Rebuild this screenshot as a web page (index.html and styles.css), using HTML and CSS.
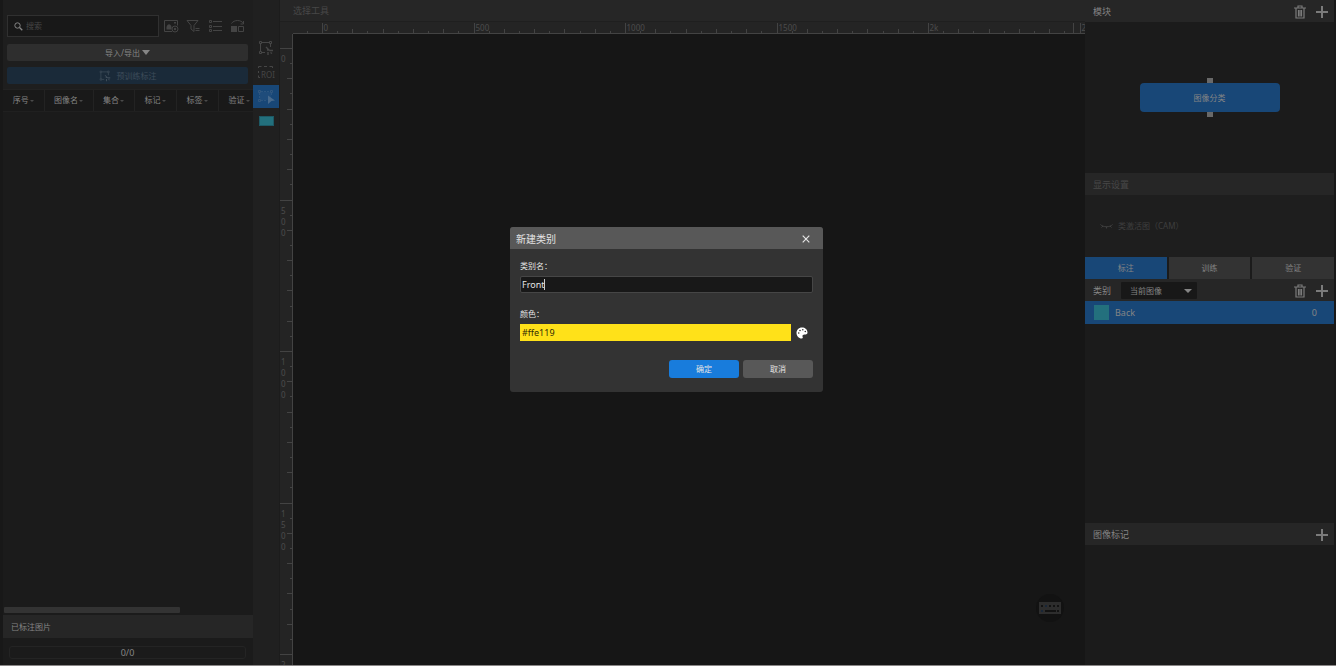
FILE: index.html
```html
<!DOCTYPE html>
<html lang="zh-CN">
<head>
<meta charset="utf-8">
<title>图像分类</title>
<link rel="stylesheet" href="styles.css">
</head>
<body>
<svg class="defs" aria-hidden="true">
  <symbol id="trash" viewBox="0 0 12 14"><path d="M0 3h12M4 2.500V1h4v1.500M2 3.500V13h8V3.500M4.500 5v6.500M6 5v6.500M7.500 5v6.500" fill="none" stroke="currentColor" stroke-width="1.200"/></symbol>
  <symbol id="plus" viewBox="0 0 12 12"><path d="M6 0v12M0 6h12" stroke="currentColor" stroke-width="2"/></symbol>
  <symbol id="nodes" viewBox="0 0 16 16"><path d="M2.500 4v7M4 2.500h7M12.500 4v3M4 12.500h3" fill="none" stroke="currentColor"/><path d="M1.500 1.500h2v2h-2zM11.500 1.500h2v2h-2zM1.500 11.500h2v2h-2z" fill="none" stroke="currentColor"/><path d="M8 7l3 3M9 10h2.500M10 12v3M11.500 10.500H15M12.500 12.500l1.500 1" fill="none" stroke="currentColor" stroke-width="1.400"/></symbol>
</svg>
<div class="app">
  <aside class="left">
    <div class="left-tools">
      <div class="search-row">
        <label class="search">
          <svg width="9" height="9" viewBox="0 0 9 9"><circle cx="3.500" cy="3.500" r="2.700" fill="none" stroke="currentColor"/><path d="M5.500 5.500L8.300 8.300" stroke="currentColor" stroke-width="1.300"/></svg>
          <input type="text" placeholder="搜索" aria-label="搜索">
        </label>
        <button class="icon" aria-label="图片"><svg width="15" height="14" viewBox="0 0 15 14"><path d="M8 12.500H.5V1.500h13v5" fill="none" stroke="currentColor"/><path d="M2.500 10.500V8C3 5 6.500 3.500 7.500 8v2.500z" fill="currentColor"/><path d="M10 3h2v1.500h-2z" fill="currentColor"/><circle cx="11" cy="10" r="3" fill="none" stroke="currentColor"/><circle cx="11" cy="10" r="1.200" fill="currentColor"/></svg></button>
        <button class="icon" aria-label="筛选"><svg width="15" height="14" viewBox="0 0 15 14"><path d="M1 1.500h11L8 6.500v6L5 10V6.500z" fill="none" stroke="currentColor"/><path d="M9.500 9.500h4M9.500 11.500h4" stroke="currentColor"/></svg></button>
        <button class="icon" aria-label="列表"><svg width="15" height="14" viewBox="0 0 15 14"><path d="M1.500 1.500h2v2h-2zM1.500 6.500h2v2h-2zM1.500 10.500h2v2h-2zM5 2.500h9M5 7.500h9M5 11.500h9" fill="none" stroke="currentColor"/></svg></button>
        <button class="icon" aria-label="视图"><svg width="15" height="14" viewBox="0 0 15 14"><path d="M1.500 4.500C4 .5 11 .5 13.500 4.500M13.500 2v3h-3" fill="none" stroke="currentColor"/><path d="M1 7h6v6H1z" fill="currentColor"/><path d="M8.500 7.500h5v5h-5z" fill="none" stroke="currentColor"/></svg></button>
      </div>
      <button class="io">导入/导出 <svg width="8" height="5" viewBox="0 0 8 5"><path d="M0 0h8L4 5z" fill="currentColor"/></svg></button>
      <button class="pretrain" disabled><svg width="12" height="12"><use href="#nodes"/></svg>预训练标注</button>
    </div>
    <div class="table-wrap">
      <table>
        <colgroup><col class="c1"><col class="c2"><col class="c3"><col class="c4"><col class="c4"><col class="c4"></colgroup>
        <thead><tr><th>序号<i></i></th><th>图像名<i></i></th><th>集合<i></i></th><th>标记<i></i></th><th>标签<i></i></th><th>验证<i></i></th></tr></thead>
      </table>
    </div>
    <div class="scrollbar"></div>
    <h2 class="bar">已标注图片</h2>
    <div class="progress-area"><div class="progress">0/0</div></div>
  </aside>

  <nav class="toolbar">
    <button aria-label="智能标注"><svg width="16" height="16"><use href="#nodes"/></svg></button>
    <button aria-label="ROI"><svg width="18" height="15" viewBox="0 0 18 15"><path d="M1.500 3V1.500h3M7 1.500h3M12.500 1.500h3V3M1.500 6v2M1.500 10.500v2H3" fill="none" stroke="currentColor"/><text x="4" y="13">ROI</text></svg></button>
    <button class="on" aria-label="选择"><svg width="18" height="16" viewBox="0 0 18 16"><path d="M3 3h11v8H3z" fill="#1f4c7b"/><path d="M4 2.500h9M2.500 4v6M14.500 4v3M4 11.500h6" stroke="#2b5580" stroke-dasharray="2 1"/><path d="M1.500 1.500h2v2h-2zM13.500 1.500h2v2h-2zM1.500 10.500h2v2h-2z" fill="none" stroke="#31577e"/><path d="M11 6.500l7 5-3.500.5-3.500 3z" fill="#47698c"/></svg></button>
    <button aria-label="颜色"><span class="chip"></span></button>
  </nav>

  <main class="center">
    <header class="bar dim">选择工具</header>
    <div class="work">
      <svg class="ruler ruler-x" id="rulerX"></svg>
      <svg class="ruler ruler-y" id="rulerY"></svg>
      <div class="canvas">
        <button class="keyboard" aria-label="快捷键"><svg width="22" height="12" viewBox="0 0 22 12"><path d="M0 0h22v12H0z" fill="#2d2d2d"/><path d="M2 3h2v2H2zM10 3h2v2h-2zM14 3h2v2h-2zM18 3h2v2h-2zM6 8h11v2H6zM18 8h2v2h-2z" fill="#121212"/><path d="M6 3h2v2H6zM2 8h2v2H2z" fill="#182638"/></svg></button>
      </div>
    </div>
  </main>

  <aside class="right">
    <header class="bar"><span class="grow">模块</span><button class="icon" aria-label="删除模块"><svg width="12" height="14"><use href="#trash"/></svg></button><button class="icon" aria-label="添加模块"><svg width="12" height="12"><use href="#plus"/></svg></button></header>
    <div class="flow"><span class="port"></span><button class="node">图像分类</button><span class="port"></span></div>
    <header class="bar dim">显示设置</header>
    <div class="cam"><svg width="13" height="6" viewBox="0 0 13 6"><path d="M.5 1.500C3 4.500 10 4.500 12.500 1.500M3 3L1.500 4.500M6.500 3.500v2M10 3l1.500 1.500" fill="none" stroke="currentColor"/></svg>类激活图（CAM）</div>
    <div class="tabs"><button class="on">标注</button><button>训练</button><button>验证</button></div>
    <div class="bar class-bar">
      <label for="scope">类别</label>
      <span class="select"><select id="scope"><option>当前图像</option></select><svg width="8" height="4" viewBox="0 0 8 4"><path d="M0 0h8L4 4z" fill="currentColor"/></svg></span>
      <span class="grow"></span>
      <button class="icon" aria-label="删除类别"><svg width="12" height="14"><use href="#trash"/></svg></button><button class="icon" aria-label="添加类别"><svg width="12" height="12"><use href="#plus"/></svg></button>
    </div>
    <div class="class-row"><span class="swatch"></span><span class="grow">Back</span><span>0</span></div>
    <div class="class-list"></div>
    <header class="bar"><span class="grow">图像标记</span><button class="icon" aria-label="添加标记"><svg width="12" height="12"><use href="#plus"/></svg></button></header>
    <div class="tag-list"></div>
  </aside>
</div>

<div class="overlay">
  <form class="dialog" role="dialog" aria-labelledby="dlg-title">
    <header><h1 id="dlg-title">新建类别</h1><button type="button" class="close" aria-label="关闭"><svg width="8" height="8" viewBox="0 0 8 8"><path d="M.7.7l6.600 6.600M7.300.7L.7 7.300" stroke="currentColor" stroke-width="1.200"/></svg></button></header>
    <div class="body">
      <label for="name">类别名：</label>
      <div class="field"><input id="name" type="text" value="Front"><span class="caret"></span></div>
      <label for="color" class="second">颜色：</label>
      <div class="color-row">
        <input id="color" type="text" value="#ffe119">
        <button type="button" class="palette" aria-label="选择颜色"><svg width="12" height="12" viewBox="0 0 12 12"><path d="M6 .5C2.500.5.5 3 .5 6s2.500 5.500 5 5.500c1.500 0 1.500-1 1-2S7 7.500 8.500 7.500c2 0 3-.5 3-2C11.500 2.500 9 .5 6 .5z" fill="#fff"/><g fill="#333"><circle cx="2.700" cy="6" r=".8"/><circle cx="4" cy="3.500" r=".8"/><circle cx="6.800" cy="2.700" r=".8"/><circle cx="9.300" cy="4.500" r=".8"/></g></svg></button>
      </div>
      <div class="actions"><button type="submit" class="ok">确定</button><button type="button">取消</button></div>
    </div>
  </form>
</div>
<script src="ruler.js"></script>
</body>
</html>
```

FILE: styles.css
```css
* { box-sizing: border-box; }
body {
  margin: 0;
  background: #181818;
  color: #858585;
  font: 9px/12px "Noto Sans", "Noto Sans CJK SC", sans-serif;
}
button, input, select { font: inherit; color: inherit; border: 0; padding: 0; margin: 0; background: none; }
button { display: flex; align-items: center; justify-content: center; }
svg { display: block; flex: none; }
h1, h2 { margin: 0; font: inherit; }
.defs { position: absolute; width: 0; height: 0; }
.grow { flex: 1; }

.app {
  display: grid;
  grid-template-columns: 250px 27px minmax(0, 1fr) 249px;
  height: 100vh;
  padding: 0 2px 0 3px;
  border-bottom: 1px solid #8a8787;
}
.bar {
  display: flex;
  align-items: center;
  flex: none;
  height: 22px;
  padding: 1px 6px 0 8px;
  background: #262626;
}
.dim { color: #484848; }
.icon { color: #7b7b7b; }

.left { display: flex; flex-direction: column; overflow: hidden; background: #1b1b1b; font-size: 8px; }
.left-tools { display: flex; flex-direction: column; padding: 15px 5px 5px 4px; background: #1e1e1e; }
.search-row { display: flex; align-items: center; gap: 7px; padding-right: 3px; }
.search-row .icon { color: #444; }
.search {
  display: flex;
  align-items: center;
  flex: 1;
  gap: 3px;
  min-width: 0;
  height: 22px;
  margin-right: -2px;
  padding-left: 6px;
  border: 1px solid #303030;
  background: #181818;
}
.search input { width: 100%; outline: 0; }
.search input::placeholder { color: #454545; }
.io, .pretrain { height: 17px; border-radius: 2px; gap: 2px; }
.io { margin-top: 7px; background: #2e2e2e; }
.pretrain { margin-top: 6px; gap: 6px; background: #1a2a39; color: #3e4c59; }
.table-wrap { flex: 1; overflow: hidden; border-top: 1px solid #222; }
table { width: 257px; table-layout: fixed; border-collapse: collapse; background: #191919; }
.c1 { width: 41px; }
.c2 { width: 49px; }
.c3 { width: 41px; }
.c4 { width: 42px; }
th { height: 21px; padding: 0; border-right: 1px solid #232323; border-bottom: 1px solid #202020; font-weight: normal; text-align: center; white-space: nowrap; }
th i { display: inline-block; margin-left: 1px; border: 2px solid transparent; border-top-color: #4a4a4a; border-bottom: 0; vertical-align: middle; }
.scrollbar { width: 176px; height: 6px; margin: 0 0 2px 1px; border-radius: 1px; background: #333; }
.left .bar { height: 23px; }
.progress-area { padding: 8px 7px 6px 6px; }
.progress { height: 13px; border: 1px solid #242424; border-radius: 3px; font-size: 9px; line-height: 11px; text-align: center; }

.toolbar { display: flex; flex-direction: column; padding-top: 35px; border-right: 1px solid #1c1c1c; background: #202020; color: #464646; }
.toolbar button { height: 25px; }
.toolbar .on { height: 23px; background: #184777; }
.toolbar text { font: 8px "Noto Sans", sans-serif; fill: currentColor; }
.chip { width: 15px; height: 10px; border: 1px solid #1d5965; background: #23707d; }

.center { display: flex; flex-direction: column; min-width: 0; background: #242424; }
.center .bar { padding-left: 13px; border-bottom: 1px solid #1f1f1f; }
.work { display: grid; flex: 1; grid-template: 12px minmax(0, 1fr) / 13px minmax(0, 1fr); min-height: 0; }
.ruler-x { grid-area: 1 / 1 / 2 / 3; width: 100%; height: 12px; }
.ruler-y { grid-area: 2 / 1; width: 13px; height: 100%; }
.ruler text { font: 8px "Noto Sans", sans-serif; fill: #4c4c4c; }
.ruler path { fill: none; stroke: #434343; shape-rendering: crispEdges; }
.canvas { display: flex; align-items: flex-end; justify-content: flex-end; padding: 0 21px 43px; background: #161616; }
.keyboard { width: 28px; height: 28px; border-radius: 50%; background: #121212; }

.right { display: flex; flex-direction: column; background: #1b1b1b; }
.right .bar { gap: 10px; }
.flow { display: flex; flex: none; flex-direction: column; align-items: center; justify-content: center; height: 151px; }
.port { width: 6px; height: 5px; background: #696969; }
.node { width: 140px; height: 29px; border-radius: 4px; background: #184777; font-size: 8px; }
.cam { display: flex; flex: none; align-items: center; gap: 5px; height: 62px; padding-left: 15px; background: #1e1e1e; color: #3f3f3f; font-size: 8px; }
.tabs { display: grid; flex: none; grid-template-columns: repeat(3, 1fr); gap: 2px; height: 22px; }
.tabs button { background: #333; font-size: 8px; }
.tabs .on { background: #184777; }
.select { display: flex; align-items: center; width: 76px; height: 17px; padding-right: 5px; border-radius: 1px; background: #181818; font-size: 8px; }
.select select { flex: 1; padding-left: 9px; appearance: none; }
.class-row { display: flex; flex: none; align-items: center; gap: 6px; height: 23px; padding: 0 17px 0 9px; background: #184777; }
.swatch { width: 15px; height: 15px; background: #23707d; }
.class-list { flex: 1; }
.tag-list { flex: none; height: 18vh; }

.overlay { position: fixed; inset: 0; display: grid; place-items: center; padding: 0 3px 47px 0; }
.dialog { width: 313px; border-radius: 3px; overflow: hidden; background: #333; color: #e4e4e4; font-size: 8px; }
.dialog header { display: flex; align-items: center; justify-content: space-between; height: 22px; padding: 1px 13px 0 6px; background: #585858; }
.dialog h1 { font-size: 10px; }
.body { display: flex; flex-direction: column; padding: 11px 10px 14px; }
.second { margin-top: 15px; }
.dialog input { width: 100%; outline: 0; font-size: 9px; }
.field { position: relative; margin-top: 4px; }
.field input { height: 17px; padding: 0 1px; border: 1px solid #464646; border-radius: 2px; background: #181818; }
.caret { position: absolute; left: 24px; top: 3px; width: 1px; height: 11px; background: #ccc; }
.color-row { display: flex; gap: 5px; margin: 4px 5px 19px 0; }
#color { flex: 1; height: 17px; padding: 0 2px; background: #ffe119; color: #332d05; }
.actions { display: flex; justify-content: flex-end; gap: 4px; }
.actions button { width: 70px; height: 18px; border-radius: 3px; background: #585858; }
.actions .ok { background: #187cdc; }
```

FILE: ruler.js
```js
const ROUND = Math.round;
const STEP = 303 / 20;
const labels = ["0", "500", "1000", "1500", "2k", "2500"];
const rulerX = document.getElementById("rulerX");
const rulerY = document.getElementById("rulerY");

function drawX() {
  const w = rulerX.clientWidth;
  let d = `M13 11.5H${w}M${w - 11.5} 1V12`, text = "";
  for (let k = -1; 42 + k * STEP < w; k++) {
    const x = ROUND(42 + k * STEP) + 0.5;
    const major = k % 10 === 0;
    d += `M${x} ${major ? 1 : k % 2 ? 9 : 7}V12`;
    if (major) text += `<text x="${x + 1}" y="9">${labels[k / 10]}</text>`;
  }
  rulerX.innerHTML = `<path d="${d}"/>${text}`;
}

function drawY() {
  const h = rulerY.clientHeight;
  let d = `M12.5 0V${h}`, text = "";
  for (let k = 0; 14 + k * STEP < h; k++) {
    const y = ROUND(14 + k * STEP) + 0.5;
    const major = k % 10 === 0;
    d += `M${major ? 0 : k % 2 ? 10 : 7} ${y}H12`;
    if (major) {
      const s = k === 40 ? "2000" : labels[k / 10];
      [...s].forEach((c, i) => {
        const base = y + 13.5 + i * 11;
        if (base - 6 < h) text += `<text x="1" y="${base}">${c}</text>`;
      });
    }
  }
  rulerY.innerHTML = `<path d="${d}"/>${text}`;
}

function draw() { drawX(); drawY(); }
draw();
window.addEventListener("resize", draw);
```
